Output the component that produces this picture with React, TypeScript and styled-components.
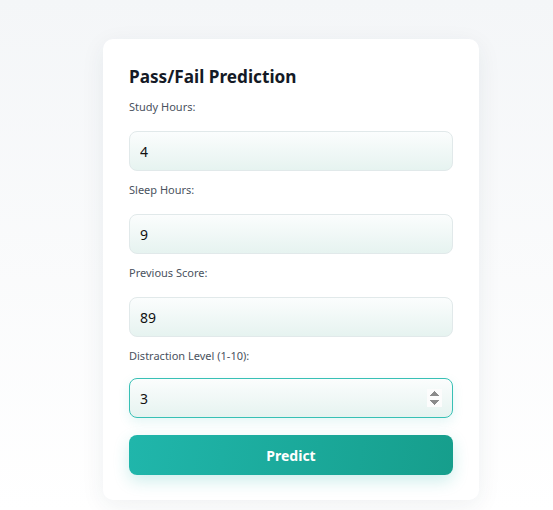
import React from "react";
import styled, { createGlobalStyle } from "styled-components";

const Global = createGlobalStyle`
  html, body { margin: 0; padding: 0; }
  body {
    min-height: 100vh;
    background: linear-gradient(180deg, #f4f6f8 0%, #ffffff 100%);
    font-family: "Noto Sans", "Open Sans", sans-serif;
  }
`;

const Page = styled.div`
  padding: 39px 0 0 103px;
  min-height: 100vh;
  box-sizing: border-box;
`;

const Card = styled.form`
  width: 376px;
  box-sizing: border-box;
  background: #ffffff;
  border-radius: 10px;
  padding: 26px 26px 25px;
  box-shadow: 0 6px 24px rgba(30, 50, 70, 0.07);
  display: flex;
  flex-direction: column;
`;

const Title = styled.h2`
  margin: 0 0 4px;
  font-size: 17.2px;
  font-weight: 700;
  color: #141a26;
  line-height: 24px;
`;

const Label = styled.label`
  font-size: 11px;
  color: #4a5260;
  line-height: 16px;
  margin: 6px 0 16px;
`;

const Input = styled.input`
  height: 40px;
  box-sizing: border-box;
  border: 1px solid #e1e9ea;
  border-radius: 8px;
  padding: 0 10px;
  font-family: inherit;
  font-size: 14px;
  color: #111;
  background: linear-gradient(180deg, #fbfdfd 0%, #e6f3f0 100%);
  outline: none;
  margin-bottom: 5px;
  &:focus {
    border-color: #38c0b5;
    transform: translateY(-2px);
    box-shadow: 0 4px 12px rgba(32, 178, 170, 0.12);
  }
`;

const Button = styled.button`
  margin-top: 10px;
  height: 40px;
  border: none;
  border-radius: 8px;
  background: linear-gradient(100deg, #20b6ab 0%, #169e8c 100%);
  color: #fff;
  font-family: inherit;
  font-size: 14px;
  font-weight: 700;
  box-shadow: 0 6px 16px rgba(32, 178, 170, 0.22);
  cursor: pointer;
`;

const fields = [
  { label: "Study Hours:", value: "4" },
  { label: "Sleep Hours:", value: "9" },
  { label: "Previous Score:", value: "89" },
  { label: "Distraction Level (1-10):", value: "3", focus: true },
];

export default function App() {
  return (
    <Page>
      <Global />
      <Card onSubmit={(e) => e.preventDefault()}>
        <Title>Pass/Fail Prediction</Title>
        {fields.map((f) => (
          <React.Fragment key={f.label}>
            <Label>{f.label}</Label>
            <Input type="number" defaultValue={f.value} autoFocus={f.focus} />
          </React.Fragment>
        ))}
        <Button type="submit">Predict</Button>
      </Card>
    </Page>
  );
}
